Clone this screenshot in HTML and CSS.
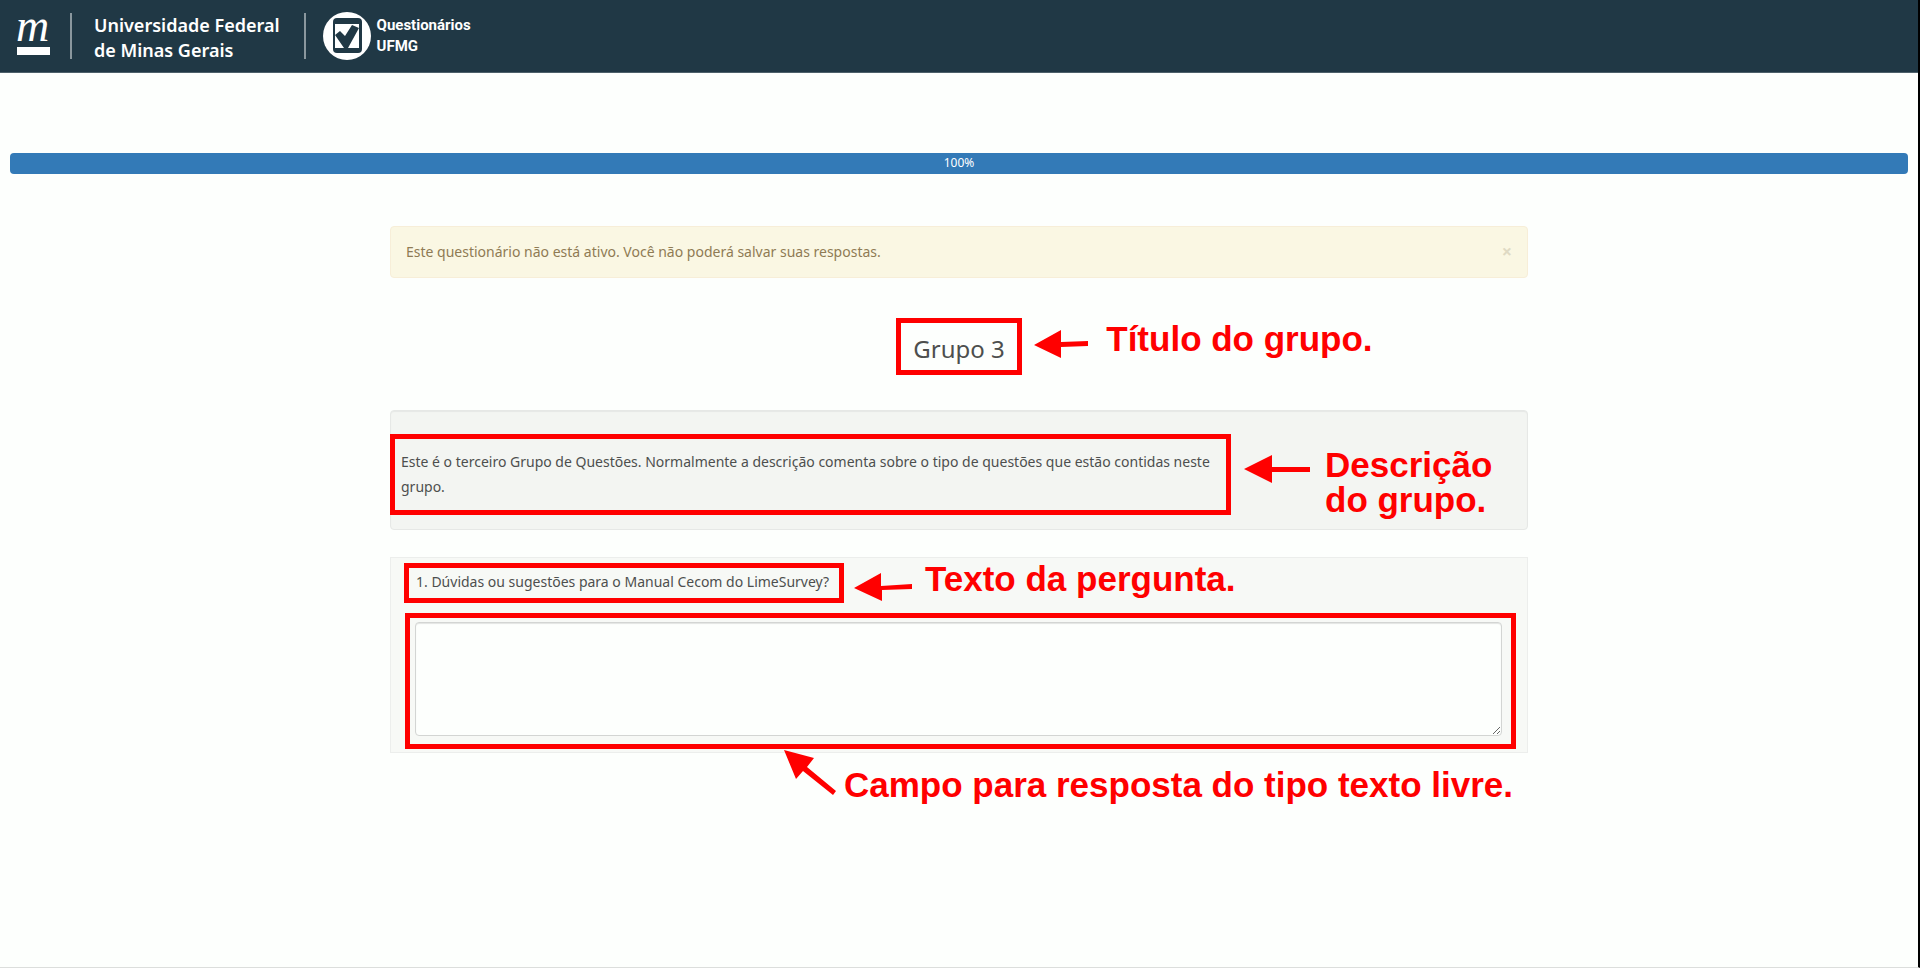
FILE: index.html
```html
<!DOCTYPE html>
<html lang="pt-BR">
<head>
<meta charset="utf-8">
<meta name="viewport" content="width=device-width, initial-scale=1">
<title>Questionários UFMG</title>
<link rel="stylesheet" href="styles.css">
</head>
<body>
<header class="topbar">
  <svg class="mark" viewBox="0 0 40 60" aria-hidden="true">
    <text class="mark-letter" x="2" y="35">m</text>
    <rect x="3" y="41" width="33" height="8" fill="#fff"/>
  </svg>
  <p class="university">Universidade Federal<br>de Minas Gerais</p>
  <div class="product">
    <svg class="product-icon" viewBox="0 0 48 48" aria-hidden="true">
      <circle cx="24" cy="24" r="24" fill="#fff"/>
      <rect x="10" y="6" width="29" height="35" rx="4" fill="#203845"/>
      <rect x="12" y="12" width="24" height="24" fill="#fff"/>
      <path d="M12 23l5-4 5 5 7-11 7 3-11 20h-4z" fill="#203845"/>
    </svg>
    <p class="product-name">Questionários<br>UFMG</p>
  </div>
</header>

<div class="progress" role="progressbar" aria-valuenow="100" aria-valuemin="0" aria-valuemax="100">100%</div>

<main class="survey">
  <div class="alert" role="alert">
    <p class="alert-text">Este questionário não está ativo. Você não poderá salvar suas respostas.</p>
    <button class="close" type="button" aria-label="Fechar">×</button>
  </div>

  <div class="title-row">
    <div class="title-box">
      <h1 class="title">Grupo 3</h1>
      <svg class="arrow arrow-title" viewBox="0 0 56 30" aria-hidden="true"><path d="M0 15L27 0V12L54 11V16L27 17V28Z"/></svg>
      <p class="note note-title">Título do grupo.</p>
    </div>
  </div>

  <section class="description">
    <div class="description-box">
      <p class="description-text">Este é o terceiro Grupo de Questões. Normalmente a descrição comenta sobre o tipo de questões que estão contidas neste grupo.</p>
    </div>
    <svg class="arrow arrow-description" viewBox="0 0 68 30" aria-hidden="true"><path d="M0 14L28 0V12H66V17H28V28Z"/></svg>
    <p class="note note-description">Descrição<br>do grupo.</p>
  </section>

  <form class="question">
    <div class="question-box">
      <label class="question-text" for="answer">1. Dúvidas ou sugestões para o Manual Cecom do LimeSurvey?</label>
      <svg class="arrow arrow-question" viewBox="0 0 60 30" aria-hidden="true"><path d="M0 15L27 0V13L58 11V16L28 17V28Z"/></svg>
      <p class="note note-question">Texto da pergunta.</p>
    </div>
    <div class="answer-box">
      <textarea class="answer" id="answer"></textarea>
      <svg class="arrow arrow-answer" viewBox="0 0 54 46" aria-hidden="true"><path d="M0 0L30 8L23 17L52 41L49 45L19 21L12 29Z"/></svg>
      <p class="note note-answer">Campo para resposta do tipo texto livre.</p>
    </div>
  </form>
</main>
</body>
</html>
```
FILE: styles.css
```css
* {
  box-sizing: border-box;
}

body {
  margin: 0;
  min-height: 100vh;
  border-right: 2px solid #000;
  border-bottom: 1px solid #dcdedc;
  background: #fdfffd;
  color: #4d4f4e;
  font: 14px/25px "Noto Sans", "Open Sans", sans-serif;
}

p, h1 {
  margin: 0;
}

.topbar {
  display: flex;
  align-items: center;
  min-height: 73px;
  padding: 0 14px;
  background: #203845;
  border-bottom: 1px solid #4d606a;
  color: #fff;
}

.mark {
  width: 40px;
  height: 60px;
}

.mark-letter {
  fill: #fff;
  font: italic 46px "Liberation Serif", serif;
}

.university {
  display: flex;
  align-items: center;
  height: 46px;
  margin-left: 16px;
  padding: 3px 24px 0 22px;
  border: solid #8a979e;
  border-width: 0 2px;
  font-size: 18px;
  font-weight: 600;
}

.product {
  display: flex;
  align-items: center;
  gap: 6px;
  margin-left: 17px;
}

.product-icon {
  width: 48px;
  height: 48px;
}

.product-name {
  font: bold 15px/21px Roboto, sans-serif;
}

.progress {
  margin: 80px 10px 0;
  height: 21px;
  border-radius: 4px;
  background: #337ab7;
  color: #fff;
  font-size: 12px;
  line-height: 20px;
  text-align: center;
}

.survey {
  max-width: 1138px;
  margin: 52px auto 0;
}

.alert {
  display: flex;
  justify-content: space-between;
  align-items: center;
  min-height: 52px;
  padding: 0 15px 2px;
  border: 1px solid #f7eed8;
  border-radius: 4px;
  background: #faf7e3;
  color: #8f7b54;
}

.close {
  padding: 0;
  border: 0;
  background: none;
  color: #dfdac4;
  font: bold 18px/20px "Open Sans", sans-serif;
}

.title-row {
  display: flex;
  justify-content: center;
  margin-top: 40px;
}

.title-box {
  position: relative;
  padding: 10px 12px 6px;
  border: 5px solid #f00;
}

.title {
  font-size: 24px;
  font-weight: 400;
  line-height: 31px;
}

.note {
  color: #f00;
  font: bold 35px/35px "Liberation Sans", Arial, sans-serif;
  white-space: nowrap;
}

.arrow {
  fill: #f00;
}

.arrow-title {
  position: absolute;
  left: 133px;
  top: 7px;
  width: 56px;
}

.note-title {
  position: absolute;
  left: 205px;
  top: -2px;
}

.description {
  display: flex;
  align-items: center;
  margin-top: 35px;
  min-height: 120px;
  border: 1px solid #e6e8e6;
  border-radius: 4px;
  background: #f3f5f2;
  box-shadow: inset 0 1px 1px #e6e8e6;
}

.description-box {
  width: 841px;
  margin: 8px 13px 0 -1px;
  padding: 10px 6px 11px;
  border: 5px solid #f00;
}

.arrow-description {
  width: 68px;
  margin-right: 13px;
}

.note-description {
  margin-top: 24px;
}

.question {
  margin-top: 27px;
  padding: 5px 11px 3px 13px;
  border: 1px solid #eceeec;
  background: #f7f9f6;
}

.question-box {
  position: relative;
  width: fit-content;
  padding: 1px 10px 4px 7px;
  border: 5px solid #f00;
}

.question-text {
  display: block;
}

.arrow-question {
  position: absolute;
  left: 445px;
  top: 5px;
  width: 60px;
}

.note-question {
  position: absolute;
  left: 516px;
  top: -7px;
}

.answer-box {
  position: relative;
  margin: 10px 0 0 1px;
  padding: 4px 9px 8px 5px;
  border: 5px solid #f00;
}

.answer {
  display: block;
  width: 100%;
  height: 114px;
  padding: 6px 12px;
  border: 1px solid #d3d5d3;
  border-radius: 4px;
  background: #fdfffd;
  box-shadow: inset 0 1px 1px #e3e5e3;
  font: inherit;
}

.arrow-answer {
  position: absolute;
  left: 374px;
  top: 132px;
  width: 54px;
}

.note-answer {
  position: absolute;
  left: 434px;
  top: 149px;
}
```
